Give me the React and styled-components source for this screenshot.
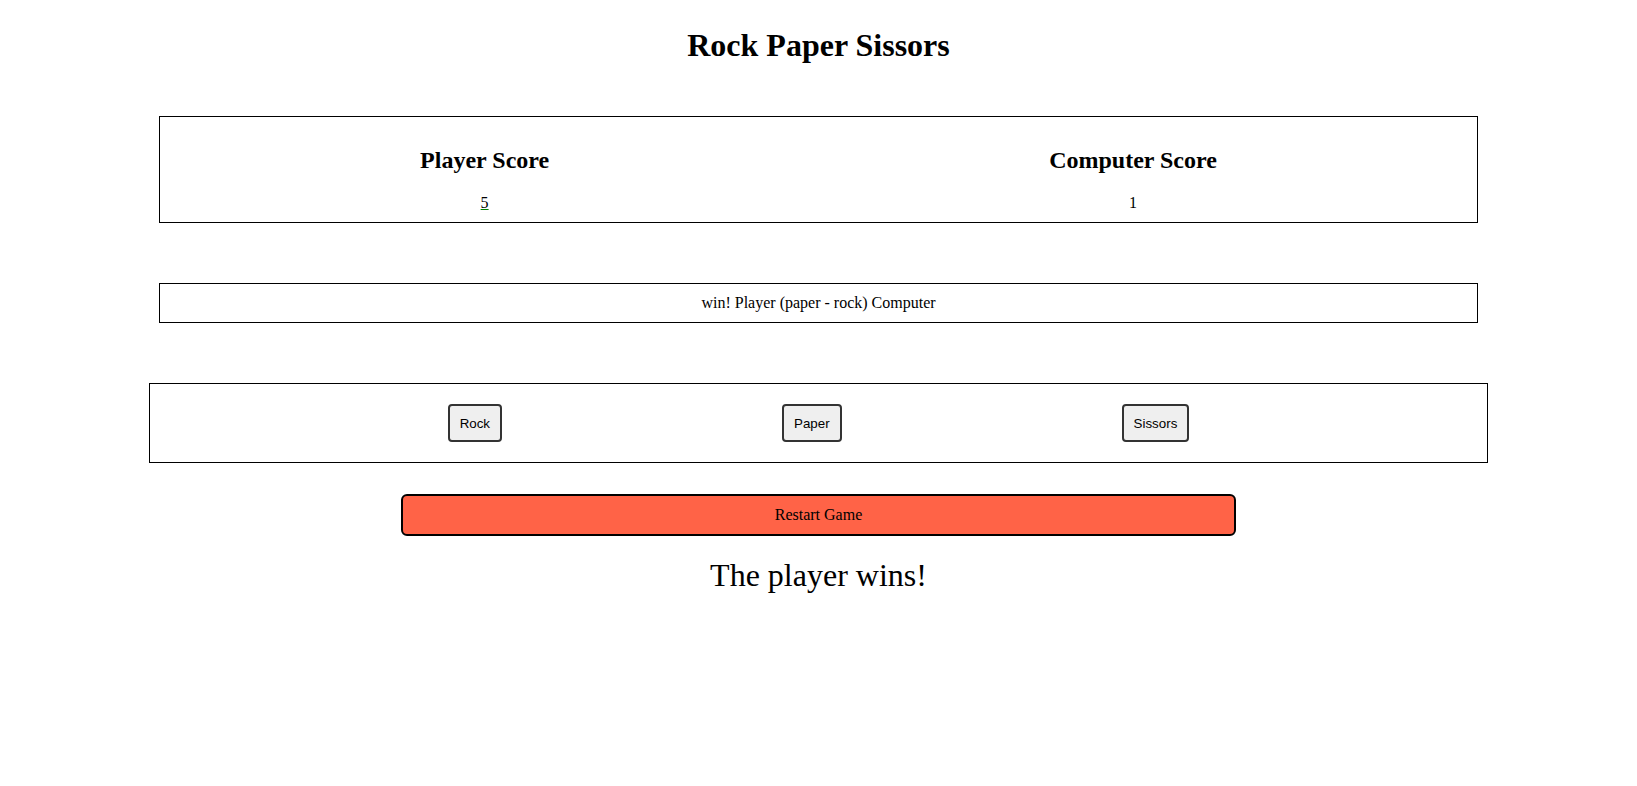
import styled, { createGlobalStyle } from "styled-components";

const GlobalStyle = createGlobalStyle`
    body {
        margin: 8px;
        font-family: "Liberation Serif", "Times New Roman", serif;
        color: black;
        background: white;
    }
`

const Page = styled.div`
    display: flex;
    flex-direction: column;
    align-items: center;
`

const Title = styled.h1`
    font-size: 32px;
    font-weight: bold;
    margin: 19px 0 52px;
    text-align: center;
`

const Box = styled.div`
    width: 80%;
    padding: ${props => props.$pad || 10}px;
    border: 1px solid black;
    margin-bottom: ${props => props.$gap || 0}px;
`

const ScoreRow = styled(Box)`
    display: flex;
    justify-content: space-around;
`

const ScoreColumn = styled.div`
    display: flex;
    flex-direction: column;
    align-items: center;
`

const ScoreTitle = styled.h2`
    font-size: 24px;
    font-weight: bold;
    margin: 20px 0;
`

const ScoreValue = styled.div`
    font-size: 16px;
    line-height: 18px;
    text-decoration: ${props => props.$winner ? "underline" : "none"};
    text-decoration-color: green;
`

const Message = styled(Box)`
    text-align: center;
    font-size: 16px;
    line-height: 18px;
`

const Choices = styled(Box)`
    display: flex;
    justify-content: center;
    gap: 280px;
`

const ChoiceButton = styled.button`
    font-family: "Liberation Sans", Arial, sans-serif;
    font-size: 13.333px;
    line-height: 15px;
    padding: 10px 10px 9px;
    background: #efefef;
    color: black;
    border: 2px solid #333;
    border-radius: 4px;
    cursor: pointer;
`

const RestartButton = styled.button`
    width: 50%;
    box-sizing: content-box;
    padding: 10px;
    font-family: inherit;
    font-size: 16px;
    line-height: 18px;
    background: #ff6347;
    color: black;
    border: 2px solid black;
    border-radius: 6px;
    cursor: pointer;
`

const Result = styled.div`
    font-size: 32px;
    line-height: 37px;
    margin-top: 21px;
    text-align: center;
`

const App = () => {
    const choices = ["Rock", "Paper", "Sissors"]
    return (
        <Page>
            <GlobalStyle />
            <Title>Rock Paper Sissors</Title>

            <ScoreRow $gap={60}>
                <ScoreColumn>
                    <ScoreTitle>Player Score</ScoreTitle>
                    <ScoreValue $winner>5</ScoreValue>
                </ScoreColumn>
                <ScoreColumn>
                    <ScoreTitle>Computer Score</ScoreTitle>
                    <ScoreValue>1</ScoreValue>
                </ScoreColumn>
            </ScoreRow>

            <Message $gap={60}>win! Player (paper - rock) Computer</Message>

            <Choices $pad={20} $gap={31}>
                {choices.map(choice => (
                    <ChoiceButton key={choice}>{choice}</ChoiceButton>
                ))}
            </Choices>

            <RestartButton>Restart Game</RestartButton>
            <Result>The player wins!</Result>
        </Page>
    )
}

export default App
